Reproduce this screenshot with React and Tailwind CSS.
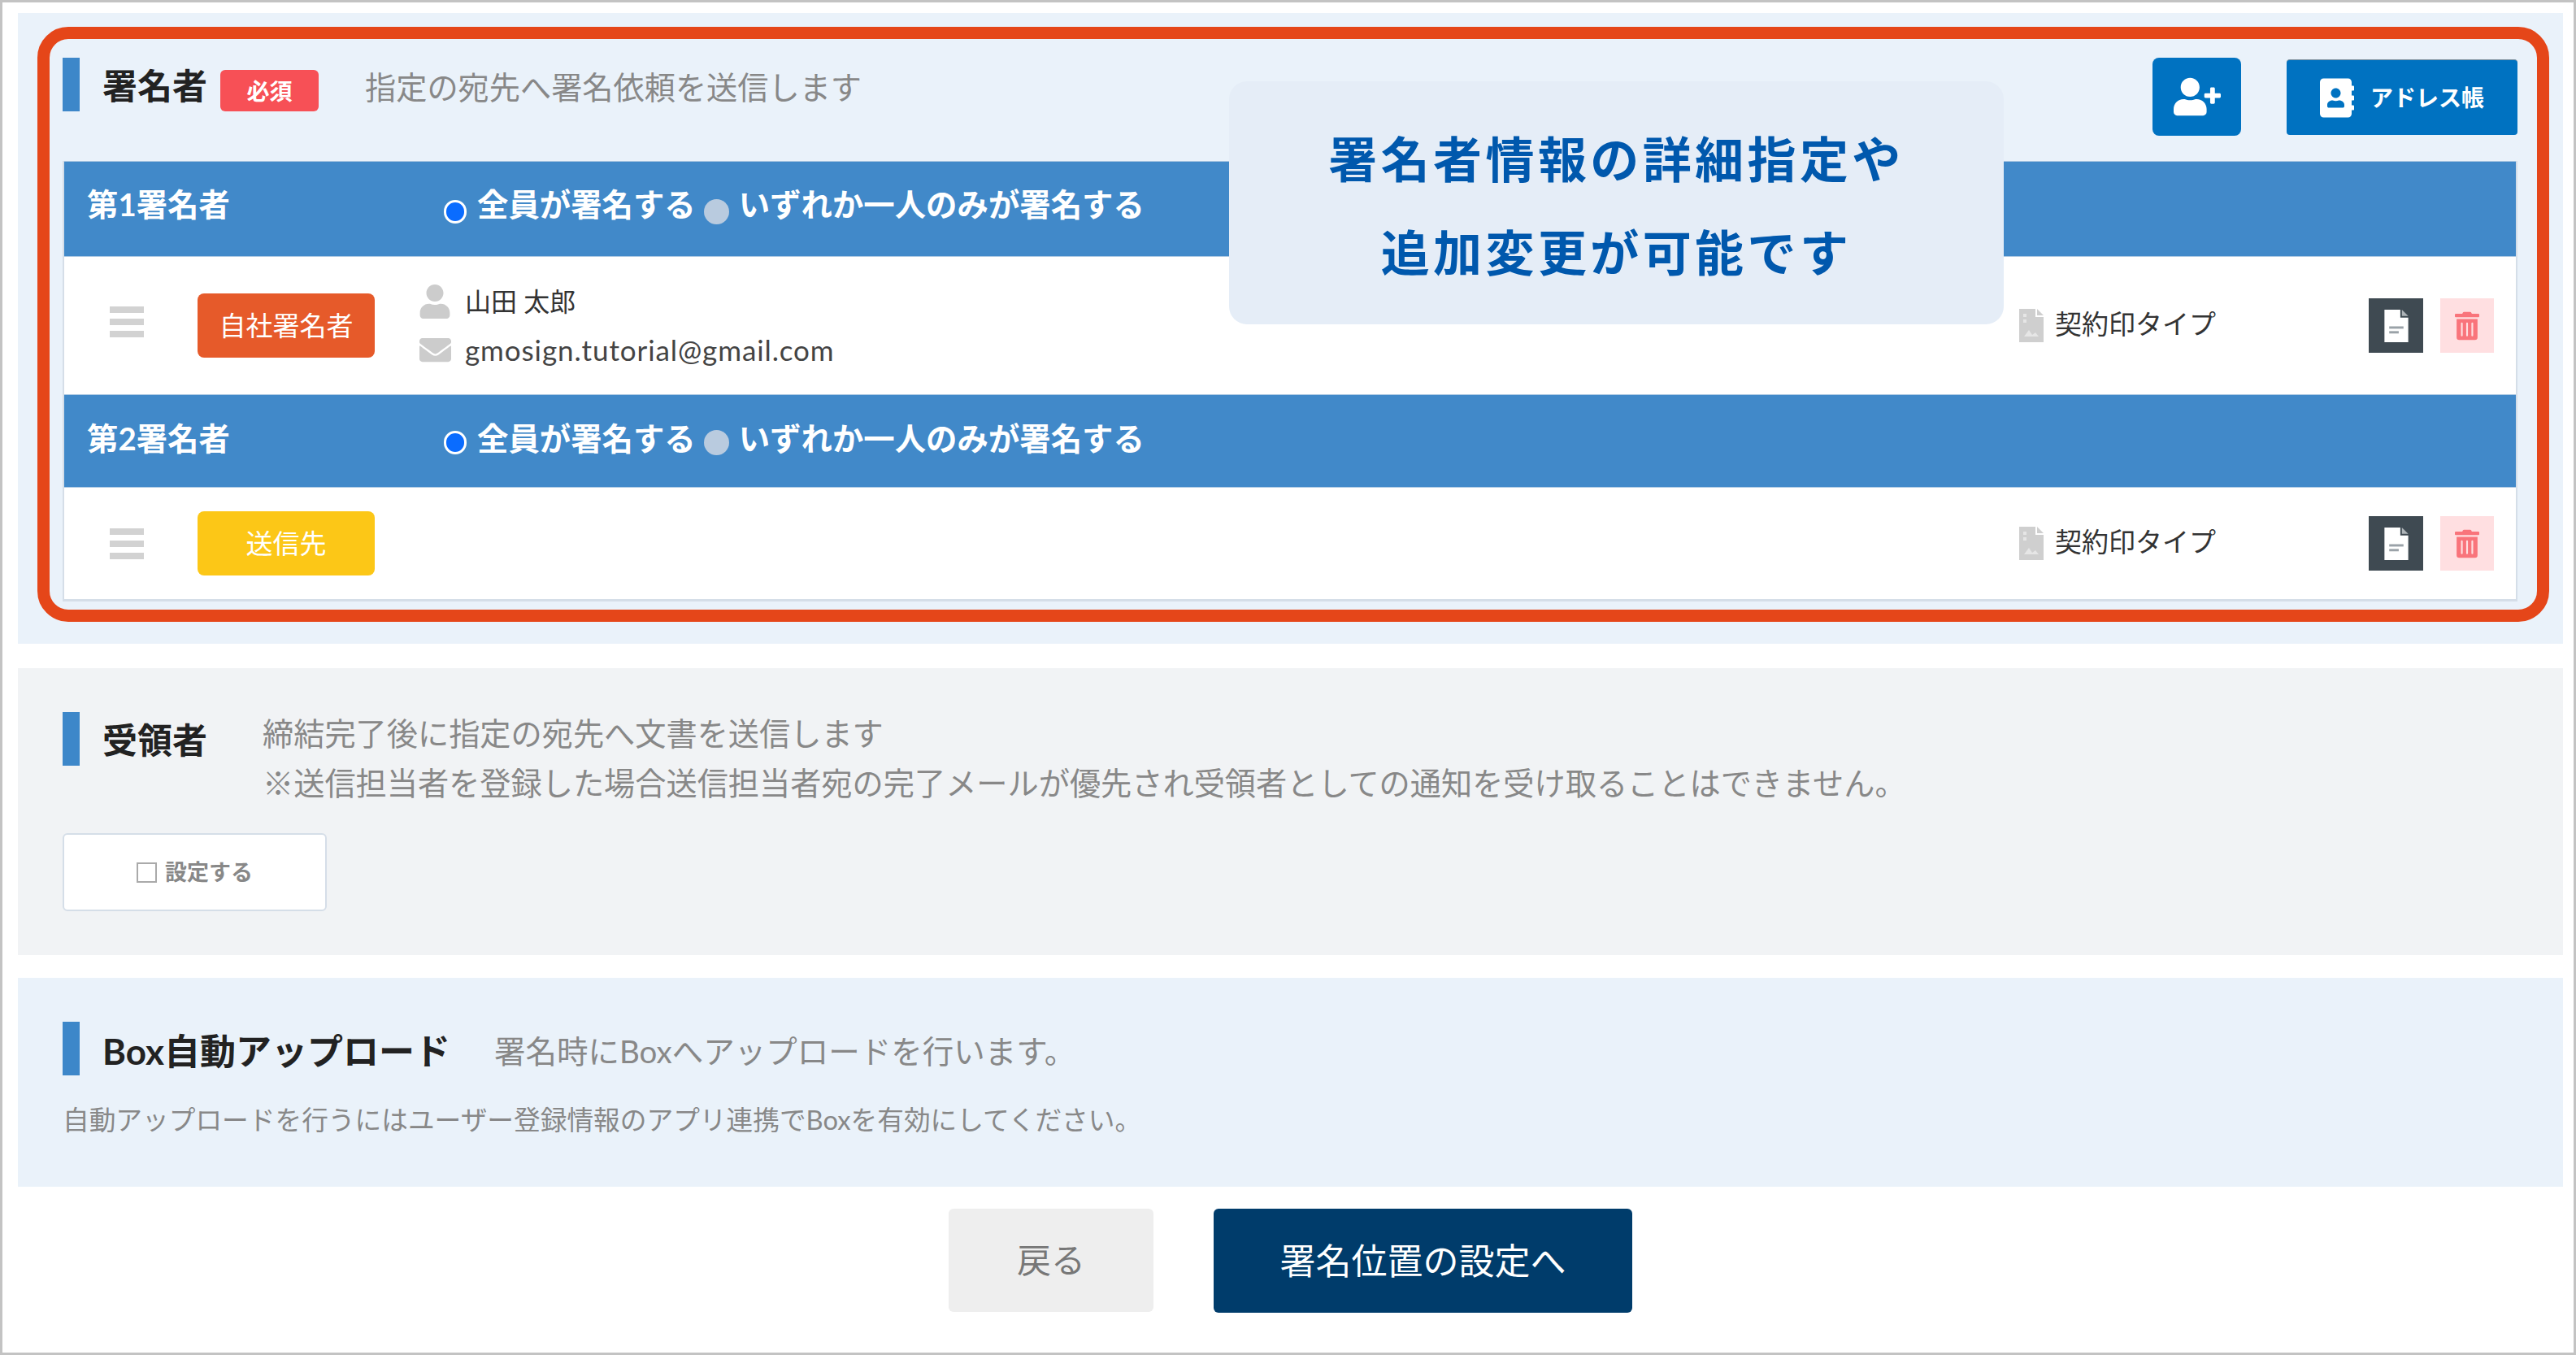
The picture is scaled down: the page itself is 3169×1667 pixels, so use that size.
import { FaUserPlus, FaAddressBook, FaUser, FaEnvelope, FaTrashAlt } from "react-icons/fa";

const font = { fontFamily: 'Lato, "Noto Sans CJK JP", sans-serif' };

function FileIcon({ className, fold, lines }) {
  return (
    <svg viewBox="0 0 30 41" className={className} fill="currentColor">
      <path d="M0 0H20V10H30V41H0Z" />
      <path d="M22 0L30 8H22Z" fill={fold} />
      <rect x="6" y="21" width="18" height="3" fill={lines} />
      <rect x="6" y="27" width="12" height="3" fill={lines} />
    </svg>
  );
}

function TypeIcon() {
  return (
    <svg viewBox="0 0 30 41" className="w-[30px] h-[41px] text-[#cfcfcf]" fill="currentColor">
      <path d="M0 0H20V10H30V41H0Z" />
      <path d="M22 0L30 8H22Z" />
      <rect x="5" y="6" width="4" height="4" fill="#e6e6e6" />
      <rect x="5" y="13" width="4" height="4" fill="#e6e6e6" />
      <path d="M6 34L12 26L16 32L20 29L24 34Z" fill="#e6e6e6" />
    </svg>
  );
}

function SectionBar() {
  return <div className="w-[21px] h-[66px] shrink-0 bg-[#3d87c9]" />;
}

function GroupHeader({ label, height, radioOffset }) {
  return (
    <div className={`flex items-center bg-[#4189c9] text-white font-bold text-[38.4px] border-y border-[#a9c7e2] pl-[28px] ${height}`}>
      <div className="w-[439px]">{label}</div>
      <span className={`w-[28px] h-[29px] shrink-0 rounded-full bg-[#0a6cff] border-[3px] border-white ${radioOffset}`} />
      <span className="ml-[13px]">全員が署名する</span>
      <span className={`ml-[10px] w-[31px] h-[31px] shrink-0 rounded-full bg-[#b9cbdf] ${radioOffset}`} />
      <span className="ml-[12px]">いずれか一人のみが署名する</span>
    </div>
  );
}

function Handle({ offset }) {
  return (
    <div className={`w-[42px] flex flex-col gap-[7px] shrink-0 ${offset}`}>
      <div className="h-[8px] bg-[#d2d2d2]" />
      <div className="h-[8px] bg-[#d2d2d2]" />
      <div className="h-[8px] bg-[#d2d2d2]" />
    </div>
  );
}

function RowActions() {
  return (
    <div className="ml-auto flex items-center pr-[27px]">
      <div className="w-[430px] flex items-center gap-[14px]">
        <TypeIcon />
        <span className="text-[33px] text-[#333] pb-[3px]">契約印タイプ</span>
      </div>
      <button className="w-[67px] h-[67px] bg-[#3f4a52] flex items-center justify-center">
        <FileIcon className="w-[30px] h-[40px] text-white" fold="#aeb4b8" lines="#9aa2a8" />
      </button>
      <button className="w-[66px] h-[67px] ml-[21px] bg-[#ffdfe1] flex items-center justify-center">
        <FaTrashAlt className="w-[30px] h-[40px] text-[#f9747b]" />
      </button>
    </div>
  );
}

export default function App() {
  return (
    <div
      style={font}
      className="w-[3169px] h-[1667px] border-[3px] border-[#c3c3c3] bg-white pl-[19px] pr-[13px] pt-[13px] overflow-hidden"
    >
      {/* 署名者 */}
      <section className="relative h-[776px] bg-[#eaf2fa] pl-[55px] pr-[56px] pt-[55px]">
        <div className="flex items-start h-[127px]">
          <SectionBar />
          <h2 className="ml-[28px] mt-[10px] text-[43px] leading-[50px] font-bold text-[#222]">署名者</h2>
          <span className="ml-[16px] mt-[15px] w-[121px] h-[51px] rounded-[6px] bg-[#f75056] text-white font-bold text-[28px] flex items-center justify-center">
            必須
          </span>
          <p className="ml-[57px] mt-[8px] text-[38.2px] leading-[56px] text-[#888]">指定の宛先へ署名依頼を送信します</p>
          <button className="ml-auto w-[109px] h-[96px] rounded-[8px] bg-[#0072c1] flex items-center justify-center">
            <FaUserPlus className="w-[58px] h-[48px] text-white" />
          </button>
          <button className="ml-[56px] mt-[2px] w-[284px] h-[93px] rounded-[4px] bg-[#0072c1] border-t border-[#7d8f9c] flex items-center pl-[41px] text-white font-bold text-[28px]">
            <FaAddressBook className="w-[42px] h-[49px]" />
            <span className="ml-[20px]">アドレス帳</span>
          </button>
        </div>

        <div className="border-x-2 border-b-[3px] border-[#d5dee8] bg-white">
          <GroupHeader label="第1署名者" height="h-[118px] pb-[10px]" radioOffset="mt-[16px]" />
          <div className="flex items-center h-[169px] pl-[56px]">
            <Handle offset="mb-[10px]" />
            <div className="ml-[66px] w-[218px] h-[79px] rounded-[8px] bg-[#e65a2a] text-white text-[33px] flex items-center justify-center">
              自社署名者
            </div>
            <div className="ml-[55px] flex flex-col gap-[16px]">
              <div className="flex items-center gap-[18px] h-[44px] text-[#333] text-[32px]">
                <FaUser className="w-[38px] h-[42px] text-[#cccccc]" />
                <span>山田 太郎</span>
              </div>
              <div className="flex items-center gap-[17px] h-[44px] text-[#444] text-[35px] tracking-[0.9px]">
                <FaEnvelope className="w-[39px] h-[39px] text-[#cccccc]" />
                <span>gmosign.tutorial@gmail.com</span>
              </div>
            </div>
            <RowActions />
          </div>
          <GroupHeader label="第2署名者" height="h-[115px] pb-[5px]" radioOffset="mt-[8px]" />
          <div className="flex items-center h-[137px] pl-[56px]">
            <Handle />
            <div className="ml-[66px] w-[218px] h-[79px] rounded-[8px] bg-[#fcc717] text-white text-[33px] flex items-center justify-center">
              送信先
            </div>
            <RowActions />
          </div>
        </div>

        {/* annotation overlay */}
        <div className="absolute left-[24px] top-[17px] w-[3090px] h-[732px] border-[15px] border-[#e54619] rounded-[38px] pointer-events-none" />
        <div className="absolute left-[1490px] top-[84px] w-[953px] h-[299px] rounded-[22px] bg-[#e5edf7] pt-[39px] text-center text-[60px] leading-[115px] tracking-[4.4px] font-bold text-[#0058ad]">
          <div>署名者情報の詳細指定や</div>
          <div>追加変更が可能です</div>
        </div>
      </section>

      {/* 受領者 */}
      <section className="mt-[30px] h-[353px] bg-[#f1f3f5] pl-[55px] pt-[50px]">
        <div className="flex items-start">
          <div className="mt-[4px]"><SectionBar /></div>
          <h2 className="ml-[28px] mt-[14px] text-[43px] leading-[50px] font-bold text-[#222]">受領者</h2>
          <div className="ml-[68px] text-[38.2px] leading-[61px] text-[#888]">
            <p>締結完了後に指定の宛先へ文書を送信します</p>
            <p>※送信担当者を登録した場合送信担当者宛の完了メールが優先され受領者としての通知を受け取ることはできません。</p>
          </div>
        </div>
        <button className="mt-[31px] w-[325px] h-[96px] rounded-[6px] bg-white border-2 border-[#d5dee8] flex items-center pl-[89px] text-[27px] font-bold text-[#888]">
          <span className="w-[25px] h-[25px] border-2 border-[#aaaaaa] bg-white" />
          <span className="ml-[10px]">設定する</span>
        </button>
      </section>

      {/* Box自動アップロード */}
      <section className="mt-[28px] h-[257px] bg-[#eaf2fa] pl-[55px] pt-[54px]">
        <div className="flex items-center">
          <SectionBar />
          <h2 className="ml-[28px] mt-[6px] text-[44px] leading-[50px] font-bold text-[#222]">Box自動アップロード</h2>
          <p className="ml-[54px] mt-[6px] text-[38.5px] leading-[50px] text-[#888]">署名時にBoxへアップロードを行います。</p>
        </div>
        <p className="mt-[35px] text-[32.7px] leading-[40px] text-[#888]">
          自動アップロードを行うにはユーザー登録情報のアプリ連携でBoxを有効にしてください。
        </p>
      </section>

      {/* footer buttons */}
      <div className="mt-[27px] flex justify-center gap-[74px]">
        <button className="w-[252px] h-[127px] rounded-[6px] bg-[#eeeeee] text-[42px] text-[#777]">戻る</button>
        <button className="w-[515px] h-[128px] rounded-[6px] bg-[#003c6b] text-[44px] text-white">署名位置の設定へ</button>
      </div>
    </div>
  );
}
